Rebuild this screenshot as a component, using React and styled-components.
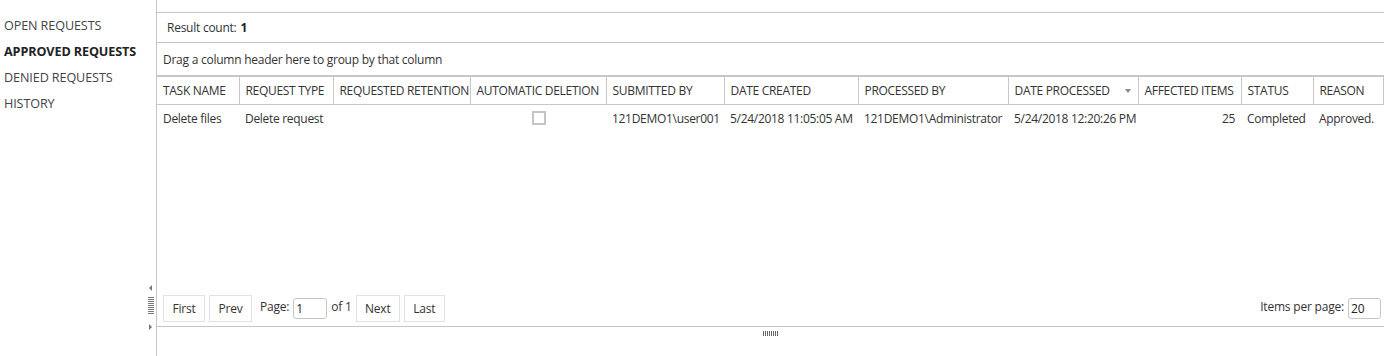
import React from 'react';
import styled, { createGlobalStyle } from 'styled-components';

const GlobalStyle = createGlobalStyle`
  html, body {
    margin: 0;
    padding: 0;
    background: #fff;
  }
  body {
    font-family: "Open Sans", "Noto Sans", "DejaVu Sans", sans-serif;
    font-size: 12px;
    color: #333;
  }
`;

// layout
const Page = styled.div`
  display: flex;
  width: 1384px;
  height: 356px;
  overflow: hidden;
`;

const Sidebar = styled.nav`
  width: 145px;
  padding-top: 17px;
  display: flex;
  flex-direction: column;
`;

const NavItem = styled.div`
  height: 26px;
  line-height: 18px;
  padding-left: 4px;
  font-size: 12.6px;
  letter-spacing: -0.1px;
  white-space: nowrap;
  color: ${(p) => (p.active ? '#222' : '#444')};
  font-weight: ${(p) => (p.active ? 700 : 400)};
`;

const Splitter = styled.div`
  width: 12px;
  border-right: 1px solid #c6c6c6;
  display: flex;
  flex-direction: column;
  align-items: center;
  padding-top: 285px;
  gap: 4px;
  box-sizing: border-box;
`;

const Arrow = styled.div`
  width: 0;
  height: 0;
  border-top: 3px solid transparent;
  border-bottom: 3px solid transparent;
  ${(p) => (p.dir === 'left' ? 'border-right: 3px solid #777;' : 'border-left: 3px solid #777;')}
`;

const GripV = styled.div`
  width: 6px;
  height: 17px;
  background: repeating-linear-gradient(to bottom, #777 0 1px, transparent 1px 2px);
  margin: 2px 0 6px;
`;

const Main = styled.div`
  flex: 1;
  display: flex;
  flex-direction: column;
  min-width: 0;
`;

const TopStrip = styled.div`
  height: 12px;
  border-bottom: 1px solid #c6c6c6;
`;

const InfoRow = styled.div`
  height: ${(p) => p.h}px;
  display: flex;
  align-items: center;
  padding-left: ${(p) => p.indent}px;
  border-bottom: 1px solid #c6c6c6;
  white-space: nowrap;
  letter-spacing: -0.25px;
  b {
    font-weight: 700;
    margin-left: 4px;
    color: #222;
  }
`;

const Table = styled.table`
  border-collapse: collapse;
  table-layout: fixed;
  width: 1226px;
`;

const HeadCell = styled.th`
  height: 27px;
  padding: 0 0 0 6px;
  text-align: left;
  font-weight: 400;
  color: #333;
  border: 1px solid #c8c8c8;
  border-left: ${(p) => (p.first ? 'none' : '1px solid #c8c8c8')};
  white-space: nowrap;
  overflow: hidden;
  letter-spacing: -0.3px;
  position: relative;
`;

const SortArrow = styled.span`
  position: absolute;
  right: 7px;
  top: 12px;
  width: 0;
  height: 0;
  border-left: 3.5px solid transparent;
  border-right: 3.5px solid transparent;
  border-top: 4px solid #888;
`;

const Cell = styled.td`
  height: 26px;
  padding: 0 6px;
  white-space: nowrap;
  overflow: hidden;
  letter-spacing: -0.3px;
  color: #333;
  text-align: ${(p) => p.align || 'left'};
`;

const Check = styled.span`
  display: inline-block;
  width: 10px;
  height: 10px;
  border: 2px solid #c4c4c4;
  vertical-align: middle;
  margin: -2px 0 0 56px;
`;

const Spacer = styled.div`
  flex: 1;
`;

const Pager = styled.div`
  display: flex;
  align-items: center;
  height: 27px;
  padding: 0 3px 4px 6px;
  margin-bottom: 4px;
  border-bottom: 1px solid #c6c6c6;
`;

const PageButton = styled.button`
  height: 27px;
  padding: 0;
  width: ${(p) => p.w}px;
  margin-right: 4px;
  background: #fff;
  border: 1px solid #e2e2e2;
  font: inherit;
  color: #333;
  letter-spacing: -0.2px;
`;

const Label = styled.span`
  margin: 0 4px 4px 4px;
  letter-spacing: -0.2px;
  white-space: nowrap;
`;

const Field = styled.input`
  box-sizing: border-box;
  width: ${(p) => p.w}px;
  height: 21px;
  border: 1px solid #c6c6c6;
  border-radius: 3px;
  padding: 0 2px;
  font: inherit;
  color: #222;
`;

const Grow = styled.div`
  flex: 1;
`;

const BottomGrip = styled.div`
  align-self: center;
  width: 16px;
  height: 5px;
  margin-left: 1px;
  background: repeating-linear-gradient(to right, #666 0 1px, transparent 1px 2px);
`;

const columns = [
  { name: 'TASK NAME', w: 82 },
  { name: 'REQUEST TYPE', w: 94 },
  { name: 'REQUESTED RETENTION', w: 137 },
  { name: 'AUTOMATIC DELETION', w: 136 },
  { name: 'SUBMITTED BY', w: 118 },
  { name: 'DATE CREATED', w: 134 },
  { name: 'PROCESSED BY', w: 150 },
  { name: 'DATE PROCESSED', w: 130, sorted: true },
  { name: 'AFFECTED ITEMS', w: 103 },
  { name: 'STATUS', w: 72 },
  { name: 'REASON', w: 70 },
];

const App = () => {
  return (
    <Page>
      <GlobalStyle />
      <Sidebar>
        <NavItem>OPEN REQUESTS</NavItem>
        <NavItem active>APPROVED REQUESTS</NavItem>
        <NavItem>DENIED REQUESTS</NavItem>
        <NavItem>HISTORY</NavItem>
      </Sidebar>
      <Splitter>
        <Arrow dir="left" />
        <GripV />
        <Arrow dir="right" />
      </Splitter>
      <Main>
        <TopStrip />
        <InfoRow h={29} indent={10}>
          Result count: <b>1</b>
        </InfoRow>
        <InfoRow h={32} indent={6}>
          Drag a column header here to group by that column
        </InfoRow>
        <Table>
          <colgroup>
            {columns.map((c) => (
              <col key={c.name} style={{ width: c.w }} />
            ))}
          </colgroup>
          <thead>
            <tr>
              {columns.map((c, i) => (
                <HeadCell key={c.name} first={i === 0}>
                  {c.name}
                  {c.sorted && <SortArrow />}
                </HeadCell>
              ))}
            </tr>
          </thead>
          <tbody>
            <tr>
              <Cell>Delete files</Cell>
              <Cell>Delete request</Cell>
              <Cell></Cell>
              <Cell><Check /></Cell>
              <Cell>121DEMO1\user001</Cell>
              <Cell>5/24/2018 11:05:05 AM</Cell>
              <Cell>121DEMO1\Administrator</Cell>
              <Cell>5/24/2018 12:20:26 PM</Cell>
              <Cell align="right">25</Cell>
              <Cell>Completed</Cell>
              <Cell>Approved.</Cell>
            </tr>
          </tbody>
        </Table>
        <Spacer />
        <Pager>
          <PageButton w={42}>First</PageButton>
          <PageButton w={43}>Prev</PageButton>
          <Label>Page:</Label>
          <Field w={34} defaultValue="1" />
          <Label>of 1</Label>
          <PageButton w={44}>Next</PageButton>
          <PageButton w={41}>Last</PageButton>
          <Grow />
          <Label>Items per page:</Label>
          <Field w={33} defaultValue="20" />
        </Pager>
        <BottomGrip />
        <div style={{ height: 20 }} />
      </Main>
    </Page>
  );
};

export default App;
